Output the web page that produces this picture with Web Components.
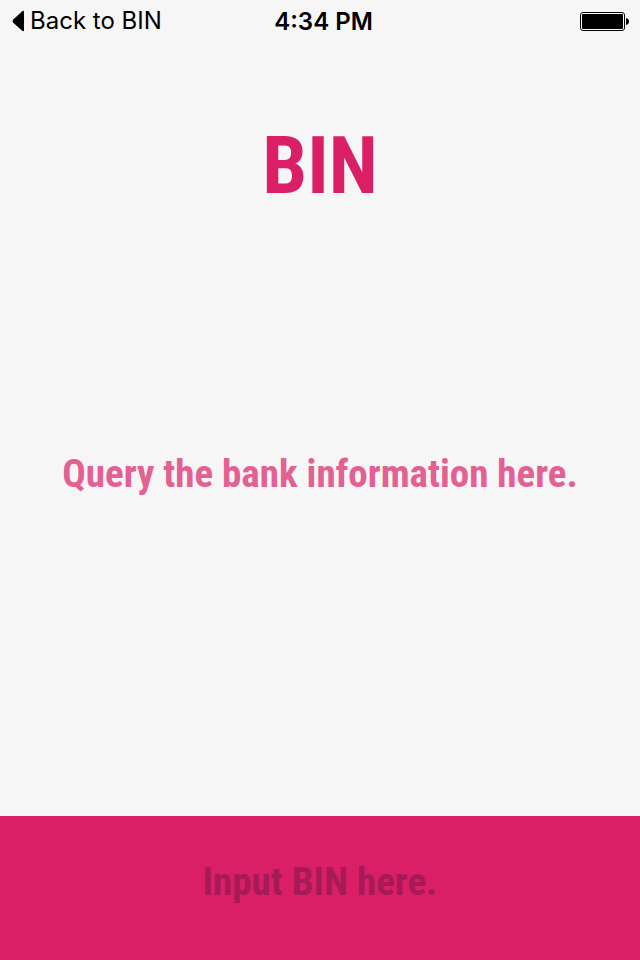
<!DOCTYPE html>
<html lang="en">
<head>
<meta charset="utf-8">
<meta name="viewport" content="width=device-width, initial-scale=1">
<title>BIN</title>
<style>
  html, body { height: 100%; }
  body { margin: 0; background: #f6f6f6; color: #000; --brand: #da1f66; --display: "Roboto Condensed", "Open Sans Condensed", sans-serif; }
</style>
</head>
<body>
<bin-app>
  <status-bar slot="status" back="Back to BIN" time="4:34 PM"></status-bar>
  <app-title slot="title">BIN</app-title>
  <result-message>Query the bank information here.</result-message>
  <bin-field slot="entry" placeholder="Input BIN here."></bin-field>
</bin-app>
<script>
class BinApp extends HTMLElement {
  constructor() {
    super();
    this.attachShadow({ mode: 'open' }).innerHTML = `
      <style>
        :host { display: flex; flex-direction: column; min-height: 100%; }
        main { flex: 1; display: flex; flex-direction: column; }
        .result { flex: 1; display: grid; align-items: center; padding-bottom: 84px; }
      </style>
      <slot name="status"></slot>
      <main>
        <slot name="title"></slot>
        <div class="result"><slot></slot></div>
      </main>
      <slot name="entry"></slot>`;
  }
}
class StatusBar extends HTMLElement {
  constructor() {
    super();
    this.attachShadow({ mode: 'open' }).innerHTML = `
      <style>
        :host { display: grid; grid-template-columns: 1fr auto 1fr; align-items: center; height: 40px; padding: 0 11px 0 12px; font: 400 24px/40px Inter, "Liberation Sans", sans-serif; }
        a { display: flex; align-items: center; gap: 6px; color: inherit; text-decoration: none; white-space: nowrap; }
        time { font-weight: 600; padding: 2px 0 0 6px; white-space: nowrap; }
        svg { display: block; }
        .battery { justify-self: end; }
      </style>
      <a href="#"><svg width="12" height="22" viewBox="0 0 12 22" aria-hidden="true"><path d="M12 1.500v19c0 .600-1 .900-1.800.300L1 12.500Q0 11.200 1 9.800L10.200 1.200C11 .500 12 .800 12 1.500z"/></svg><span></span></a>
      <time></time>
      <svg class="battery" width="49" height="20" viewBox="0 0 49 20" role="img" aria-label="Battery full"><rect x=".5" y="1.500" width="44" height="18" rx="2.500" fill="#fff" stroke="#000"/><rect x="2" y="3" width="41" height="15" rx="1"/><path d="M46 7c4 .500 4 6.500 0 7z"/></svg>`;
    this.shadowRoot.querySelector('span').textContent = this.getAttribute('back');
    this.shadowRoot.querySelector('time').textContent = this.getAttribute('time');
  }
}
class AppTitle extends HTMLElement {
  constructor() {
    super();
    this.attachShadow({ mode: 'open' }).innerHTML = `
      <style>
        :host { display: block; padding-top: 76px; }
        h1 { margin: 0; font: 700 80px/100px var(--display); color: var(--brand); text-align: center; }
      </style>
      <h1><slot></slot></h1>`;
  }
}
class ResultMessage extends HTMLElement {
  constructor() {
    super();
    this.attachShadow({ mode: 'open' }).innerHTML = `
      <style>
        :host { display: block; }
        p { margin: 0; font: 700 39px/56px var(--display); color: #e36093; text-align: center; }
      </style>
      <p><slot></slot></p>`;
  }
}
class BinField extends HTMLElement {
  constructor() {
    super();
    this.attachShadow({ mode: 'open' }).innerHTML = `
      <style>
        :host { display: block; background: var(--brand); padding: 38px 16px 50px; }
        input { display: block; box-sizing: border-box; width: 100%; height: 56px; margin: 0; padding: 0; border: 0; outline: 0; background: transparent; font: 700 39px/56px var(--display); color: #fff; text-align: center; }
        input::placeholder { color: #a61a58; opacity: 1; }
      </style>
      <input type="text" inputmode="numeric">`;
    const input = this.shadowRoot.querySelector('input');
    input.placeholder = this.getAttribute('placeholder');
    input.setAttribute('aria-label', 'BIN');
  }
}
customElements.define('status-bar', StatusBar);
customElements.define('app-title', AppTitle);
customElements.define('result-message', ResultMessage);
customElements.define('bin-field', BinField);
customElements.define('bin-app', BinApp);
</script>
</body>
</html>
